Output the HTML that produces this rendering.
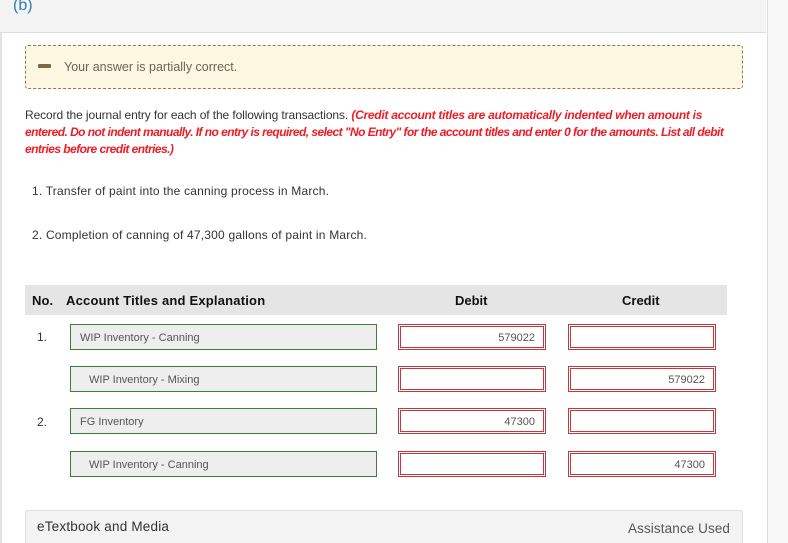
<!DOCTYPE html>
<html><head><meta charset="utf-8"><style>
*{margin:0;padding:0;box-sizing:border-box}
html,body{width:788px;height:543px;overflow:hidden}
body{background:#f8f8f8;font-family:"Liberation Sans",sans-serif;color:#333;position:relative}
.panel{position:absolute;left:0;top:0;width:768px;height:543px;background:#fff;border-right:1px solid #ddd;border-left:2px solid #e2e2e2}
.hdr{position:absolute;left:0;top:0;width:766px;height:33px;background:#f4f4f4;border-bottom:1px solid #ddd}
.a{position:absolute;white-space:nowrap}
.alert{position:absolute;left:25px;top:45px;width:718px;height:44px;background:#fdf6e1;border:1px dashed #8e7b58;border-radius:3px}
.red{color:#ee1c25;font-weight:bold;font-style:italic}
.g{position:absolute;left:70px;width:307px;height:26px;background:#eee;border:1px solid #3f7d3a;font-size:11px;color:#555;padding:7px 0 0 9px;letter-spacing:0}
.r{position:absolute;width:148px;height:26px;border:1px solid #c0393b;padding:1px}
.r div{width:100%;height:100%;border:1px solid #c0393b;font-size:11px;color:#555;text-align:right;padding:5px 8px 0 0;letter-spacing:0}
</style></head><body>
<div class="panel"></div>
<div class="hdr"></div>
<div class="a" style="left:13px;top:-3px;font-size:16px;color:#2b7cb8">(b)</div>
<div class="alert"></div>
<div class="a" style="left:38px;top:64px;width:13px;height:4px;background:#7a6a48;border-radius:1px"></div>
<div class="a" style="left:64px;top:60px;font-size:12.5px;color:#6d6553;letter-spacing:0">Your answer is partially correct.</div>
<div class="a" style="left:25px;top:108px;font-size:12px;letter-spacing:-0.1px">Record the journal entry for each of the following transactions. <span class="red" style="letter-spacing:-0.27px">(Credit account titles are automatically indented when amount is</span></div>
<div class="a red" style="left:25px;top:125px;font-size:12px;letter-spacing:-0.55px">entered. Do not indent manually. If no entry is required, select "No Entry" for the account titles and enter 0 for the amounts. List all debit</div>
<div class="a red" style="left:25px;top:142px;font-size:12px;letter-spacing:-0.55px">entries before credit entries.)</div>
<div class="a" style="left:32px;top:184px;font-size:12px;letter-spacing:0.2px">1. Transfer of paint into the canning process in March.</div>
<div class="a" style="left:32px;top:228px;font-size:12px;letter-spacing:0.2px">2. Completion of canning of 47,300 gallons of paint in March.</div>
<div class="a" style="left:25px;top:285px;width:702px;height:30px;background:#e5e5e5"></div>
<div class="a" style="left:32px;top:293px;font-size:13px;font-weight:bold;color:#111;letter-spacing:0.1px">No.</div>
<div class="a" style="left:66px;top:293px;font-size:13px;font-weight:bold;color:#111;letter-spacing:0.2px">Account Titles and Explanation</div>
<div class="a" style="left:455px;top:293px;font-size:13px;font-weight:bold;color:#111">Debit</div>
<div class="a" style="left:622px;top:293px;font-size:13px;font-weight:bold;color:#111">Credit</div>
<div class="a" style="left:37px;top:330px;font-size:12px">1.</div>
<div class="a" style="left:37px;top:415px;font-size:12px">2.</div>
<div class="g" style="top:324px">WIP Inventory - Canning</div>
<div class="g" style="top:366px;padding-left:18px">WIP Inventory - Mixing</div>
<div class="g" style="top:408px">FG Inventory</div>
<div class="g" style="top:451px;padding-left:18px">WIP Inventory - Canning</div>
<div class="r" style="left:398px;top:324px"><div>579022</div></div>
<div class="r" style="left:568px;top:324px"><div></div></div>
<div class="r" style="left:398px;top:366px"><div></div></div>
<div class="r" style="left:568px;top:366px"><div>579022</div></div>
<div class="r" style="left:398px;top:408px"><div>47300</div></div>
<div class="r" style="left:568px;top:408px"><div></div></div>
<div class="r" style="left:398px;top:451px"><div></div></div>
<div class="r" style="left:568px;top:451px"><div>47300</div></div>
<div class="a" style="left:25px;top:510px;width:718px;height:33px;background:#f3f3f3;border:1px solid #ddd;border-bottom:none;border-radius:3px 3px 0 0"></div>
<div class="a" style="left:37px;top:519px;font-size:13.5px;color:#333;letter-spacing:0.2px">eTextbook and Media</div>
<div class="a" style="left:628px;top:521px;font-size:13.5px;color:#555;letter-spacing:0.1px">Assistance Used</div>
</body></html>
